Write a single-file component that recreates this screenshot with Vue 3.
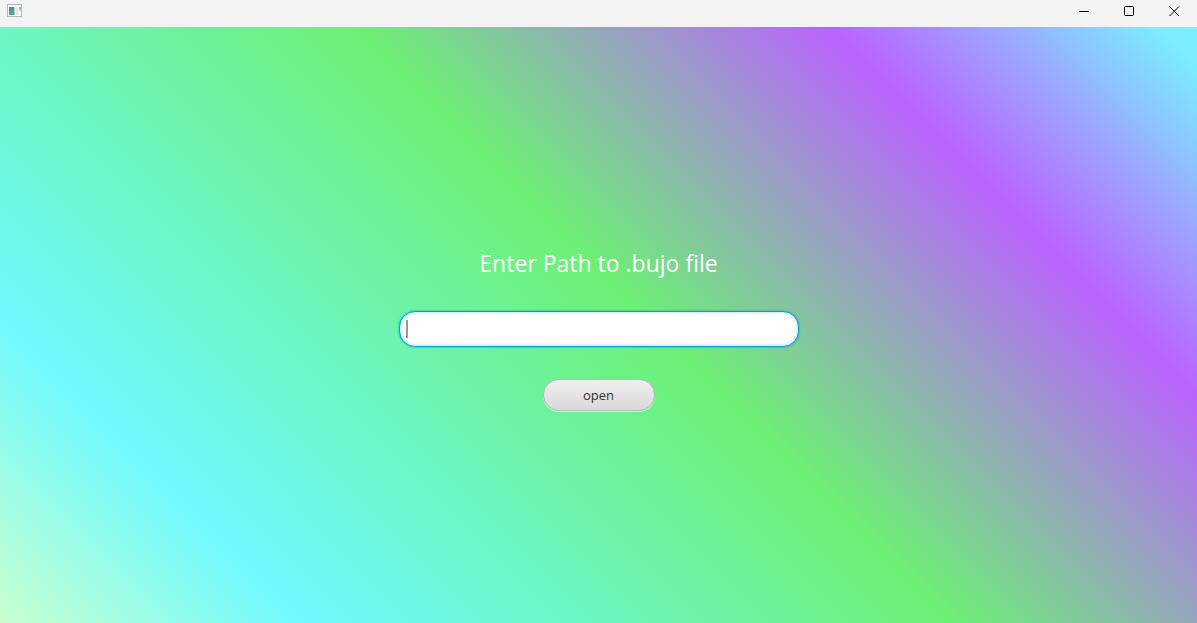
<script setup>
import { ref } from 'vue'

const path = ref('')
</script>

<template>
  <div class="window">
    <header class="titlebar">
      <svg class="app-icon" width="16" height="14" viewBox="0 0 16 14" aria-hidden="true">
        <defs>
          <linearGradient id="pane" x1="0" y1="0" x2="1" y2="1">
            <stop offset="0" stop-color="#4a86b0" />
            <stop offset="1" stop-color="#5fae88" />
          </linearGradient>
        </defs>
        <rect x="0.5" y="0.5" width="14" height="12" fill="#fafafa" stroke="#b4b6ba" />
        <rect x="2" y="3" width="5" height="8" fill="url(#pane)" />
        <rect x="7" y="3" width="1" height="8" fill="#a9c4cc" />
        <rect x="9" y="3" width="2" height="8" fill="#e4e4e6" />
        <rect x="12" y="3" width="2" height="2" fill="#8fb0cc" />
        <rect x="12" y="5" width="2" height="2" fill="#b4d6bc" />
      </svg>
      <div class="controls">
        <button type="button" aria-label="Minimize">
          <svg width="11" height="11" viewBox="0 0 11 11"><path d="M0 5.5H10" /></svg>
        </button>
        <button type="button" aria-label="Maximize">
          <svg width="11" height="11" viewBox="0 0 11 11"><rect x="0.5" y="0.5" width="9" height="9" rx="1" /></svg>
        </button>
        <button type="button" aria-label="Close">
          <svg width="11" height="11" viewBox="0 0 11 11"><path d="M0.5 0.5L10 10M10 0.5L0.5 10" /></svg>
        </button>
      </div>
    </header>

    <main class="content">
      <form class="form" @submit.prevent>
        <label class="prompt" for="path">Enter Path to .bujo file</label>
        <div class="field">
          <input id="path" v-model="path" type="text" autocomplete="off" />
          <span v-if="!path" class="caret"></span>
        </div>
        <button class="open" type="submit">open</button>
      </form>
    </main>
  </div>
</template>

<style>
body {
  margin: 0;
}
</style>

<style scoped>
.window {
  display: flex;
  flex-direction: column;
  min-height: 100vh;
  font-family: "Open Sans", "Noto Sans", sans-serif;
}

.titlebar {
  display: flex;
  justify-content: space-between;
  height: 27px;
  background: #f3f3f3;
}

.app-icon {
  margin: 4px 0 0 7px;
}

.controls {
  display: flex;
  height: 23px;
}

.controls button {
  display: flex;
  align-items: center;
  justify-content: center;
  width: 45px;
  padding: 0;
  border: 0;
  background: transparent;
}

.controls svg {
  fill: none;
  stroke: #000;
  stroke-width: 1;
}

.content {
  flex: 1;
  display: flex;
  align-items: center;
  justify-content: center;
  background: linear-gradient(
    45deg,
    #c8ffce 0%,
    #6ff9ff 17%,
    #6cf074 53%,
    #ba62ff 79.5%,
    #7beeff 98%
  );
}

.form {
  display: flex;
  flex-direction: column;
  align-items: center;
  width: 400px;
  max-width: 100%;
  padding-top: 8px;
}

.prompt {
  margin-bottom: 32px;
  color: #fff;
  font-size: 23px;
  line-height: 32px;
}

.field {
  position: relative;
  width: 100%;
  margin-bottom: 32px;
}

.field input {
  box-sizing: border-box;
  display: block;
  width: 100%;
  height: 36px;
  padding: 0 8px;
  border: 1px solid #039ed3;
  border-radius: 16px;
  outline: none;
  background: #fff;
  box-shadow: 0 0 2px #039ed3, inset 0 0 2px 2px #d9f0f9;
  font: inherit;
  font-size: 14px;
}

.caret {
  position: absolute;
  top: 9px;
  left: 7px;
  width: 2px;
  height: 18px;
  background: #999;
}

.open {
  width: 112px;
  height: 32px;
  padding: 0;
  border: 1px solid #bababa;
  border-radius: 16px;
  background: linear-gradient(#efefef, #d9d9d9);
  box-shadow: 0 1px 0 rgba(255, 255, 255, 0.6), inset 0 1px 0 #f8f8f8;
  color: #333;
  font: inherit;
  font-size: 13px;
}
</style>
